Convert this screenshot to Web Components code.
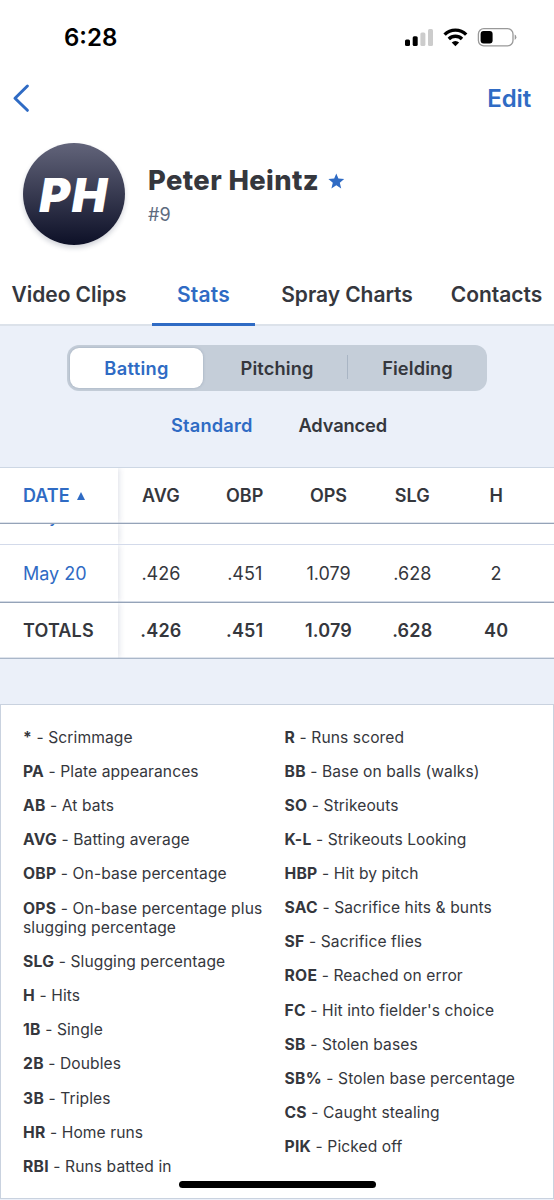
<!DOCTYPE html>
<html lang="en">
<head>
<meta charset="utf-8">
<title>Player stats</title>
<style>
html,body{margin:0;height:1200px;overflow:hidden}
body{background:#fff;font-family:Inter,"Liberation Sans",sans-serif;color:#35373d;-webkit-font-smoothing:antialiased}
</style>
</head>
<body>
<player-app></player-app>
<script>
const define = (name, markup, setup) => {
  const tpl = document.createElement('template');
  tpl.innerHTML = markup;
  customElements.define(name, class extends HTMLElement {
    constructor() {
      super();
      this.attachShadow({mode: 'open'}).appendChild(tpl.content.cloneNode(true));
    }
    connectedCallback() { if (setup) setup(this, this.shadowRoot); }
  });
};

define('status-bar', `
<style>
:host{display:flex;box-sizing:border-box;height:74px;padding:0 36px 0 64px;align-items:center;justify-content:space-between;color:#000}
time{font-size:24px;font-weight:600;line-height:30px;letter-spacing:0;padding-top:1px}
svg{display:block}
</style>
<time>6:28</time>
<svg width="114" height="24" viewBox="0 0 114 24">
  <rect x="1" y="14.5" width="5" height="6.5" rx="1.5"/>
  <rect x="8.7" y="11.3" width="5" height="9.7" rx="1.5"/>
  <rect x="16.4" y="7.6" width="5" height="13.4" rx="1.5" fill="#ccc"/>
  <rect x="24" y="4" width="5" height="17" rx="1.5" fill="#ccc"/>
  <g fill="none" stroke="#000" stroke-width="3.4">
    <path d="M40.6 9.6a15.3 15.3 0 0 1 21.6 0"/>
    <path d="M44.8 14a9.4 9.4 0 0 1 13.2 0"/>
  </g>
  <path d="M51.4 21.2l-3.7-3.6a5.2 5.2 0 0 1 7.4 0z"/>
  <rect x="74.4" y="3.7" width="34.6" height="17.2" rx="5.4" fill="none" stroke="#999" stroke-width="1.3"/>
  <rect x="76.6" y="6" width="12" height="12.6" rx="3"/>
  <path d="M110.7 9.6v5.4a3 3 0 0 0 0-5.4z" fill="#999"/>
</svg>`);

define('nav-bar', `
<style>
:host{display:flex;box-sizing:border-box;height:49px;padding:0 23px 0 11px;align-items:center;justify-content:space-between;color:#2f6bc4}
span{font-size:24px;font-weight:600;line-height:30px;letter-spacing:-.15px}
svg{display:block;margin-bottom:2px}
</style>
<svg width="20" height="30" viewBox="0 0 20 30"><path d="M16.4 3L4 15.2l12.4 12.1" fill="none" stroke="#2f6bc4" stroke-width="3" stroke-linecap="round" stroke-linejoin="round"/></svg>
<span>Edit</span>`);

define('player-header', `
<style>
:host{display:flex;box-sizing:border-box;height:141px;padding:20px 0 0 23px}
.avatar{display:flex;width:102px;height:102px;border-radius:50%;align-items:center;justify-content:center;background:linear-gradient(#62647a,#0d1027);box-shadow:0 3px 5px #1d274433;color:#fff;font-size:47px;font-weight:900;font-style:italic;letter-spacing:1.6px;line-height:1}
.info{margin-left:23px;padding-top:20px}
.name{display:flex;align-items:center;font-size:27.3px;line-height:36px;font-weight:800;letter-spacing:.42px}
svg{margin-left:9px}
.number{font-size:18px;line-height:26px;color:#5d6b7e;margin-top:3px}
</style>
<div class="avatar"><slot name="initials"></slot></div>
<div class="info">
  <div class="name"><slot></slot><svg width="17" height="17" viewBox="0 0 17 17"><path fill="#2f6bc4" d="M8.3 .5l2.1 5.1 5.8.4-4.4 3.7 1.4 5.7-4.9-3.1-4.9 3.1 1.4-5.7L.4 6l5.8-.4z"/></svg></div>
  <div class="number"><slot name="number"></slot></div>
</div>`);

define('tab-bar', `
<style>
:host{display:grid;box-sizing:border-box;height:62px;grid-template-columns:152px 103px 184px 115px;border-bottom:2px solid #dce2ea}
</style><slot></slot>`);

define('tab-item', `
<style>
:host{display:flex;justify-content:center;height:62px;box-sizing:border-box;padding-top:18px;font-size:21px;line-height:26px;font-weight:600;letter-spacing:-.05px;white-space:nowrap}
:host([active]){color:#2f6bc4;border-bottom:3px solid #2f6bc4;letter-spacing:.2px}
</style><slot></slot>`);

define('segmented-control', `
<style>
:host{display:grid;box-sizing:border-box;width:420px;height:46px;margin:19px auto 0 67px;padding:3px;grid-template-columns:133px 145px 136px;border-radius:12px;background:#c5ced9}
</style><slot></slot>`);

define('segment-item', `
<style>
:host{display:flex;position:relative;align-items:center;justify-content:center;font-size:18.3px;font-weight:600;letter-spacing:.1px;padding-left:3px}
:host([active]){background:#fff;color:#2f6bc4;border-radius:9px;box-shadow:0 0 3px #52658055;padding-left:0;letter-spacing:.3px}
:host([divided])::after{content:"";position:absolute;right:0;top:7px;bottom:9px;width:1px;background:#a9b5c4}
</style><slot></slot>`);

define('mode-switch', `
<style>
:host{display:flex;gap:46px;padding:22px 0 0 171px;font-size:18.3px;line-height:24px;font-weight:600;letter-spacing:-.15px}
b{font-weight:600;color:#2f6bc4;letter-spacing:.15px}
</style><b><slot name="on"></slot></b><span><slot></slot></span>`);

define('stats-row', `
<style>
:host{display:grid;box-sizing:border-box;grid-template-columns:118px repeat(5,83.8px) 1fr;align-items:stretch;background:#fff;font-size:18px;font-weight:400;overflow:hidden}
:host([strong]){font-weight:600}
div{display:flex;align-items:center;justify-content:center;padding-left:2px}
.first{justify-content:flex-start;padding-left:23px;box-shadow:1px 0 6px #3c50782e;clip-path:inset(0 -12px 0 0)}
:host([link]) .first{color:#2f6bc4}
svg{margin-left:7px}
:host([scrolled]) .first{align-items:flex-start;line-height:22px}
:host([scrolled]) span{margin-top:-19px}
</style>`, (host, root) => {
  host.getAttribute('cells').split('|').forEach((text, i) => {
    const cell = document.createElement('div');
    const label = document.createElement('span');
    label.textContent = text;
    cell.appendChild(label);
    if (!i) {
      cell.className = 'first';
      if (host.hasAttribute('sorted'))
        cell.insertAdjacentHTML('beforeend', '<svg width="8" height="8" viewBox="0 0 8 8"><path fill="#2f6bc4" d="M4 0l4 8H0z"/></svg>');
    }
    root.appendChild(cell);
  });
});

define('stats-table', `
<style>
:host{display:block;border-top:1px solid #cdd7e4}
::slotted(.head){height:56px;border-bottom:1px solid #95a3b8;box-shadow:inset 0 -1px #dfe4ec}
::slotted(.partial){height:21px;border-bottom:1px solid #d3daea}
::slotted(.game){height:58px;border-bottom:1px solid #95a3b8;box-shadow:inset 0 -1px #d3dae5}
::slotted(.total){height:56px;border-bottom:1px solid #aab7c9;box-shadow:inset 0 -1px #dfe4ec;letter-spacing:.15px}
</style><slot></slot>`);

define('legend-item', `
<style>
:host{display:block}
b{font-weight:700;font-size:15.7px;letter-spacing:.25px}
</style><b></b> - <slot></slot>`, (host, root) => {
  root.querySelector('b').textContent = host.getAttribute('abbr');
});

define('stats-legend', `
<style>
:host{display:grid;box-sizing:border-box;height:495px;margin-top:45px;border:1px solid #c9d2df;background:#fff;grid-template-columns:241.5px 1fr;column-gap:20px;padding:23.6px 20px 0 22px;font-size:15.6px;line-height:18.9px;letter-spacing:.09px}
div{display:flex;flex-direction:column;gap:15.23px}
.left{gap:15.3px}
</style>
<div class="left"><slot name="left"></slot></div>
<div><slot></slot></div>`);

define('home-indicator', `
<style>
:host{position:absolute;left:179px;top:1181px;width:197px;height:7px;border-radius:4px;background:#000}
</style>`);

define('player-app', `
<style>
:host{display:block;position:relative;width:554px;height:1200px;overflow:hidden}
main{background:#ebf0f9;height:874px;overflow:hidden}
.filters{height:141px;display:flex;flex-direction:column}
</style>
<status-bar></status-bar>
<nav-bar></nav-bar>
<player-header><span slot="initials">PH</span>Peter Heintz<span slot="number">#9</span></player-header>
<tab-bar>
  <tab-item style="padding-right:14px">Video Clips</tab-item>
  <tab-item active>Stats</tab-item>
  <tab-item>Spray Charts</tab-item>
  <tab-item>Contacts</tab-item>
</tab-bar>
<main>
  <div class="filters">
    <segmented-control>
      <segment-item active>Batting</segment-item>
      <segment-item divided>Pitching</segment-item>
      <segment-item>Fielding</segment-item>
    </segmented-control>
    <mode-switch><span slot="on">Standard</span>Advanced</mode-switch>
  </div>
  <stats-table>
    <stats-row class="head" strong link sorted cells="DATE|AVG|OBP|OPS|SLG|H"></stats-row>
    <stats-row class="partial" link scrolled cells="May|||||"></stats-row>
    <stats-row class="game" link cells="May 20|.426|.451|1.079|.628|2"></stats-row>
    <stats-row class="total" strong cells="TOTALS|.426|.451|1.079|.628|40"></stats-row>
  </stats-table>
  <stats-legend>
    <legend-item slot="left" abbr="*">Scrimmage</legend-item>
    <legend-item slot="left" abbr="PA">Plate appearances</legend-item>
    <legend-item slot="left" abbr="AB">At bats</legend-item>
    <legend-item slot="left" abbr="AVG">Batting average</legend-item>
    <legend-item slot="left" abbr="OBP">On-base percentage</legend-item>
    <legend-item slot="left" abbr="OPS">On-base percentage plus slugging percentage</legend-item>
    <legend-item slot="left" abbr="SLG">Slugging percentage</legend-item>
    <legend-item slot="left" abbr="H">Hits</legend-item>
    <legend-item slot="left" abbr="1B">Single</legend-item>
    <legend-item slot="left" abbr="2B">Doubles</legend-item>
    <legend-item slot="left" abbr="3B">Triples</legend-item>
    <legend-item slot="left" abbr="HR">Home runs</legend-item>
    <legend-item slot="left" abbr="RBI">Runs batted in</legend-item>
    <legend-item abbr="R">Runs scored</legend-item>
    <legend-item abbr="BB">Base on balls (walks)</legend-item>
    <legend-item abbr="SO">Strikeouts</legend-item>
    <legend-item abbr="K-L">Strikeouts Looking</legend-item>
    <legend-item abbr="HBP">Hit by pitch</legend-item>
    <legend-item abbr="SAC">Sacrifice hits &amp; bunts</legend-item>
    <legend-item abbr="SF">Sacrifice flies</legend-item>
    <legend-item abbr="ROE">Reached on error</legend-item>
    <legend-item abbr="FC">Hit into fielder's choice</legend-item>
    <legend-item abbr="SB">Stolen bases</legend-item>
    <legend-item abbr="SB%">Stolen base percentage</legend-item>
    <legend-item abbr="CS">Caught stealing</legend-item>
    <legend-item abbr="PIK">Picked off</legend-item>
  </stats-legend>
</main>
<home-indicator></home-indicator>`);
</script>
</body>
</html>
